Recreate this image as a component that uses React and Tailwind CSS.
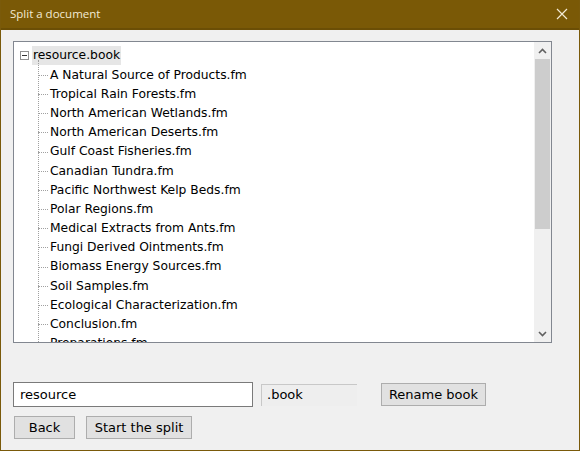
import React from 'react';

const files = [
  'A Natural Source of Products.fm',
  'Tropical Rain Forests.fm',
  'North American Wetlands.fm',
  'North American Deserts.fm',
  'Gulf Coast Fisheries.fm',
  'Canadian Tundra.fm',
  'Pacific Northwest Kelp Beds.fm',
  'Polar Regions.fm',
  'Medical Extracts from Ants.fm',
  'Fungi Derived Ointments.fm',
  'Biomass Energy Sources.fm',
  'Soil Samples.fm',
  'Ecological Characterization.fm',
  'Conclusion.fm',
  'Preparations.fm',
];

function TreeRow({ name }) {
  return (
    <div className="flex items-center h-[19.2px] relative">
      <div className="w-[25px] shrink-0 relative h-full">
        <div className="absolute left-[24px] top-1/2 w-[10px] border-t border-dotted border-[#a0a0a0]" />
      </div>
      <span className="ml-[11px] whitespace-nowrap">{name}</span>
    </div>
  );
}

export default function App() {
  return (
    <div className="w-[580px] h-[451px] bg-[#f0f0f0] flex flex-col border-x border-b border-[#7a5a0a] text-[#000] text-[13px] font-['DejaVu_Sans',sans-serif] overflow-hidden">
      {/* title bar */}
      <div className="h-[30px] shrink-0 bg-[#7a5906] border-b-2 border-[#6b4e05] flex items-center justify-between pl-[9px] pr-[10px]">
        <span className="text-[#f3ead4] text-[11.5px] font-['Open_Sans',sans-serif]">Split a document</span>
        <svg width="12" height="12" viewBox="0 0 12 12" className="mr-[1px]">
          <path d="M1 1 L11 11 M11 1 L1 11" stroke="#f3ead4" strokeWidth="1.2" />
        </svg>
      </div>

      <div className="flex-1 flex flex-col pl-[12px] pr-[27px] pt-[11px]">
        {/* tree view */}
        <div className="h-[302px] border border-[#828790] bg-white flex overflow-hidden">
          <div className="flex-1 relative overflow-hidden pt-[4px] text-[12.3px]">
            <div className="absolute left-[24px] top-[18px] h-[300px] border-l border-dotted border-[#a0a0a0]" />
            <div className="flex items-center h-[19.2px]">
              <div className="ml-[6px] w-[9px] h-[9px] border border-[#919191] flex items-center justify-center bg-white">
                <div className="w-[5px] border-t border-[#333]" />
              </div>
              <span className="ml-[3px] px-[1px] bg-[#e6e6e6]">resource.book</span>
            </div>
            {files.map((f) => (
              <TreeRow key={f} name={f} />
            ))}
          </div>
          {/* scrollbar */}
          <div className="w-[17px] bg-[#f0f0f0] flex flex-col">
            <div className="h-[17px] flex items-center justify-center">
              <svg width="9" height="6" viewBox="0 0 9 6">
                <path d="M1 5 L4.5 1.5 L8 5" stroke="#606060" strokeWidth="1.6" fill="none" />
              </svg>
            </div>
            <div className="mx-[1px] h-[170px] bg-[#cdcdcd]" />
            <div className="flex-1" />
            <div className="h-[17px] flex items-center justify-center">
              <svg width="9" height="6" viewBox="0 0 9 6">
                <path d="M1 1 L4.5 4.5 L8 1" stroke="#606060" strokeWidth="1.6" fill="none" />
              </svg>
            </div>
          </div>
        </div>

        {/* name row */}
        <div className="flex items-center mt-[39px]">
          <div className="w-[240px] h-[25px] border border-[#7a7a7a] bg-white flex items-center pl-[6px]">resource</div>
          <div className="ml-[8px] w-[96px] h-[22px] border-l border-t border-[#c8c8c8] bg-[#eeeeee] flex items-center pl-[5px]">.book</div>
          <button className="ml-[24px] w-[105px] h-[23px] bg-[#e1e1e1] border border-[#adadad] flex items-center justify-center">Rename book</button>
        </div>

        {/* action row */}
        <div className="flex items-center mt-[9px] ml-[1px] gap-[11px]">
          <button className="w-[61px] h-[23px] bg-[#e1e1e1] border border-[#adadad] flex items-center justify-center">Back</button>
          <button className="w-[106px] h-[23px] bg-[#e1e1e1] border border-[#adadad] flex items-center justify-center">Start the split</button>
        </div>
      </div>
    </div>
  );
}
